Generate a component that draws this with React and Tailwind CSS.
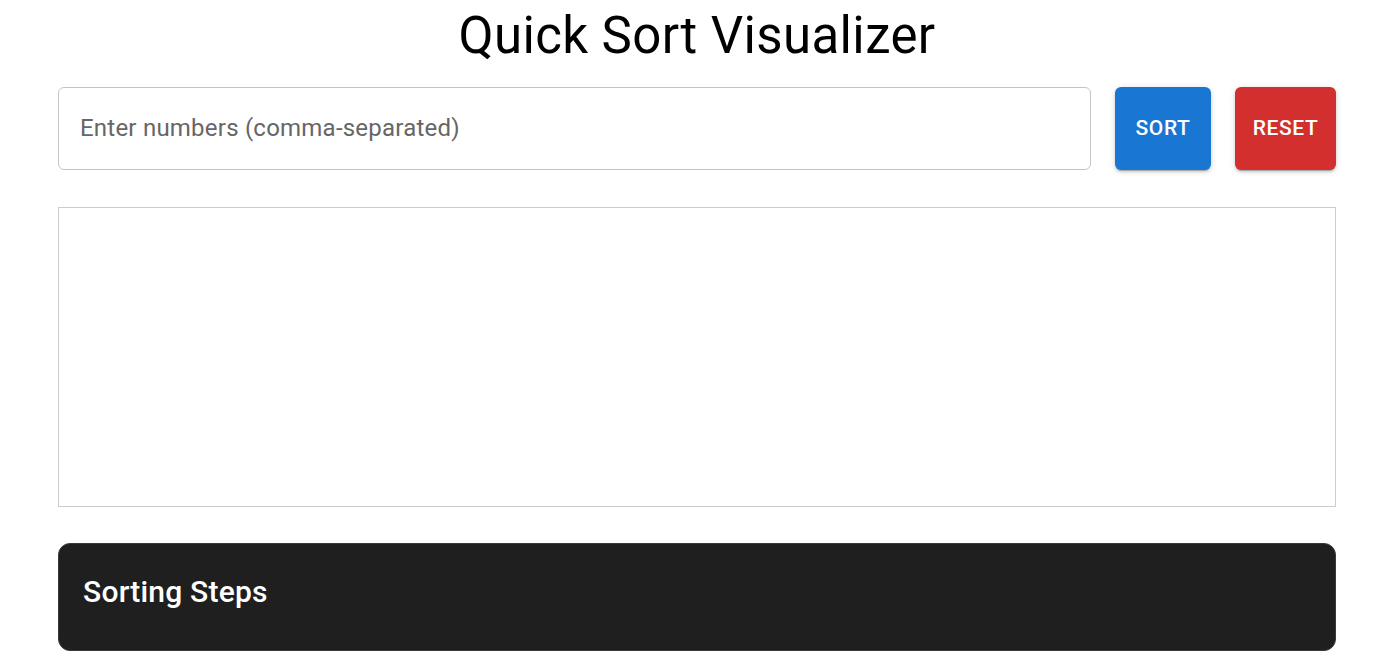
export default function App() {
  return (
    <div
      className="min-h-screen bg-white pl-[58px] pr-[53px]"
      style={{ fontFamily: "Roboto, 'Liberation Sans', sans-serif" }}
    >
      <h1 className="text-center text-[51px] leading-[63px] tracking-[0.00735em] font-normal text-black pt-[4px] pb-[20px]">
        Quick Sort Visualizer
      </h1>

      {/* Input + actions */}
      <div className="flex items-center gap-[24px]">
        <input
          type="text"
          placeholder="Enter numbers (comma-separated)"
          className="flex-1 h-[83px] rounded-[6px] border border-[#c4c4c4] px-[21px] pb-[1px] text-[24px] tracking-[0.00938em] text-black placeholder:text-[#666] outline-none"
        />
        <button className="h-[83px] w-[96px] rounded-[6px] bg-[#1976d2] text-white text-[21px] tracking-[0.02857em] font-medium uppercase shadow-[0_3px_1px_-2px_rgba(0,0,0,0.2),0_2px_3px_0_rgba(0,0,0,0.14),0_1px_7px_0_rgba(0,0,0,0.12)]">
          Sort
        </button>
        <button className="h-[83px] w-[101px] rounded-[6px] bg-[#d32f2f] text-white text-[21px] tracking-[0.02857em] font-medium uppercase shadow-[0_3px_1px_-2px_rgba(0,0,0,0.2),0_2px_3px_0_rgba(0,0,0,0.14),0_1px_7px_0_rgba(0,0,0,0.12)]">
          Reset
        </button>
      </div>

      {/* Bars area */}
      <div className="mt-[37px] h-[300px] border border-[#cccccc]"></div>

      {/* Steps */}
      <div className="mt-[36px] rounded-[12px] border border-[#3a3a3a] bg-[#1f1f1f] px-[24px] pt-[24px] pb-[34px]">
        <h2 className="text-[30px] leading-[48px] tracking-[0.0075em] font-medium text-white">
          Sorting Steps
        </h2>
      </div>
    </div>
  );
}
